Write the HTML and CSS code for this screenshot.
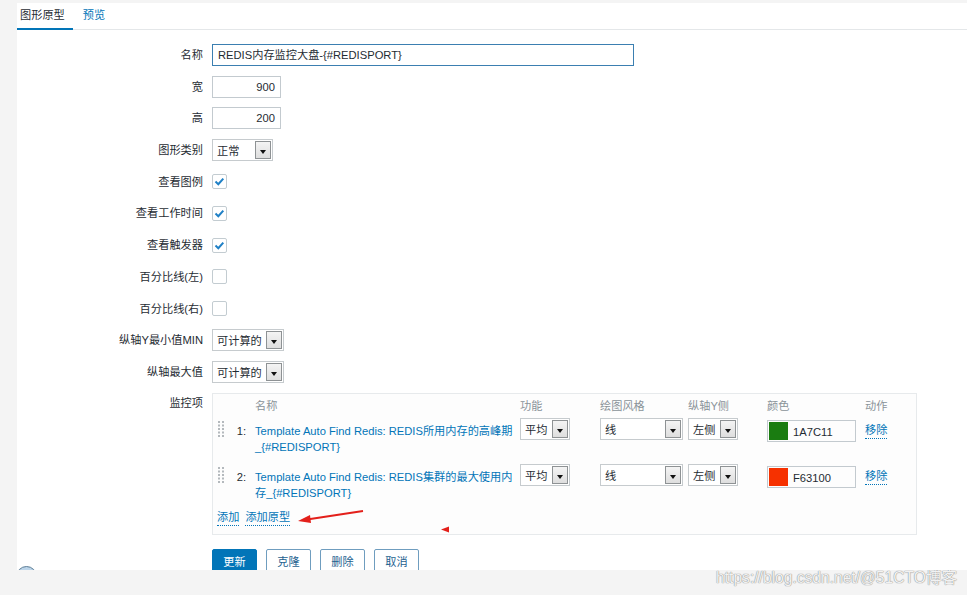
FILE: index.html
```html
<!DOCTYPE html>
<html lang="zh">
<head>
<meta charset="utf-8">
<title>图形原型</title>
<link rel="stylesheet" href="styles.css">
</head>
<body>
<div class="page">
  <div class="panel">
    <nav class="tabs">
      <span class="tab active">图形原型</span>
      <a class="tab link">预览</a>
    </nav>
    <div class="form">
      <div class="row"><span class="lbl">名称</span><div class="field name-field focus">REDIS内存监控大盘-{#REDISPORT}</div></div>
      <div class="row"><span class="lbl">宽</span><div class="field num-field">900</div></div>
      <div class="row"><span class="lbl">高</span><div class="field num-field">200</div></div>
      <div class="row"><span class="lbl">图形类别</span><div class="select s-type"><span class="val">正常</span><span class="btn"></span></div></div>
      <div class="row"><span class="lbl">查看图例</span><span class="check"><svg viewBox="0 0 15 15" width="15" height="15"><path d="M3.5 7.6 L6.3 10.2 L11.3 4.6" fill="none" stroke="#1f80c6" stroke-width="2"/></svg></span></div>
      <div class="row"><span class="lbl">查看工作时间</span><span class="check"><svg viewBox="0 0 15 15" width="15" height="15"><path d="M3.5 7.6 L6.3 10.2 L11.3 4.6" fill="none" stroke="#1f80c6" stroke-width="2"/></svg></span></div>
      <div class="row"><span class="lbl">查看触发器</span><span class="check"><svg viewBox="0 0 15 15" width="15" height="15"><path d="M3.5 7.6 L6.3 10.2 L11.3 4.6" fill="none" stroke="#1f80c6" stroke-width="2"/></svg></span></div>
      <div class="row"><span class="lbl">百分比线(左)</span><span class="check"></span></div>
      <div class="row"><span class="lbl">百分比线(右)</span><span class="check"></span></div>
      <div class="row"><span class="lbl">纵轴Y最小值MIN</span><div class="select s-calc"><span class="val">可计算的</span><span class="btn"></span></div></div>
      <div class="row"><span class="lbl">纵轴最大值</span><div class="select s-calc"><span class="val">可计算的</span><span class="btn"></span></div></div>
      <div class="row top"><span class="lbl lbl-top">监控项</span>
        <div class="items">
          <div class="irow head">
            <span></span><span></span><span>名称</span><span>功能</span><span>绘图风格</span><span>纵轴Y侧</span><span>颜色</span><span>动作</span>
          </div>
          <div class="irow item">
            <span class="handle"><svg width="6" height="16" viewBox="0 0 6 16"><g fill="#b4b9bd"><rect x="0" y="0" width="2" height="2"/><rect x="4" y="0" width="2" height="2"/><rect x="0" y="3.5" width="2" height="2"/><rect x="4" y="3.5" width="2" height="2"/><rect x="0" y="7" width="2" height="2"/><rect x="4" y="7" width="2" height="2"/><rect x="0" y="10.5" width="2" height="2"/><rect x="4" y="10.5" width="2" height="2"/><rect x="0" y="14" width="2" height="2"/><rect x="4" y="14" width="2" height="2"/></g></svg></span>
            <span class="no">1:</span>
            <a class="iname">Template Auto Find Redis: REDIS所用内存的高峰期_{#REDISPORT}</a>
            <div class="select s-func"><span class="val">平均</span><span class="btn"></span></div>
            <div class="select s-style"><span class="val">线</span><span class="btn"></span></div>
            <div class="select s-side"><span class="val">左侧</span><span class="btn"></span></div>
            <div class="color"><span class="swatch green"></span><span>1A7C11</span></div>
            <a class="act dotted">移除</a>
          </div>
          <div class="irow item">
            <span class="handle"><svg width="6" height="16" viewBox="0 0 6 16"><g fill="#b4b9bd"><rect x="0" y="0" width="2" height="2"/><rect x="4" y="0" width="2" height="2"/><rect x="0" y="3.5" width="2" height="2"/><rect x="4" y="3.5" width="2" height="2"/><rect x="0" y="7" width="2" height="2"/><rect x="4" y="7" width="2" height="2"/><rect x="0" y="10.5" width="2" height="2"/><rect x="4" y="10.5" width="2" height="2"/><rect x="0" y="14" width="2" height="2"/><rect x="4" y="14" width="2" height="2"/></g></svg></span>
            <span class="no">2:</span>
            <a class="iname">Template Auto Find Redis: REDIS集群的最大使用内存_{#REDISPORT}</a>
            <div class="select s-func"><span class="val">平均</span><span class="btn"></span></div>
            <div class="select s-style"><span class="val">线</span><span class="btn"></span></div>
            <div class="select s-side"><span class="val">左侧</span><span class="btn"></span></div>
            <div class="color"><span class="swatch red"></span><span>F63100</span></div>
            <a class="act dotted">移除</a>
          </div>
          <div class="adds"><a class="dotted">添加</a><a class="dotted">添加原型</a></div>
        </div>
      </div>
      <div class="buttons">
        <span class="button primary">更新</span>
        <span class="button">克隆</span>
        <span class="button">删除</span>
        <span class="button">取消</span>
      </div>
    </div>
    <svg class="annot" width="967" height="595" viewBox="0 0 967 595">
      <line x1="346" y1="508" x2="290" y2="516.5" stroke="#e3201b" stroke-width="2"/>
      <polygon points="281,518 293,512 294,520" fill="#e3201b"/>
      <polygon points="424,526.5 432,523.5 432,529.5" fill="#e3201b"/>
    </svg>
    <span class="help-circle"></span>
  </div>
  <div class="footer"><span class="mark">https://blog.csdn.net/@51CTO博客</span></div>
</div>
</body>
</html>
```
FILE: styles.css
```css
* { box-sizing: border-box; }
body {
  margin: 0;
  background: #f4f4f4;
  font-family: "Liberation Sans", "Noto Sans CJK SC", sans-serif;
  font-size: 11.2px;
  line-height: 16px;
  color: #1f2c33;
}
a { color: #0275b8; text-decoration: none; }
.page { padding: 3px 0 0 17px; }
.panel {
  background: #fff;
  height: 567px;
  overflow: hidden;
  position: relative;
}
.tabs {
  display: flex;
  height: 27px;
  border-bottom: 1px solid #e4e7e9;
}
.tab {
  padding: 4px 8px 0 3px;
  height: 27px;
}
.tab.active {
  border-bottom: 2px solid #0275b8;
  color: #1f2c33;
}
.tab.link { margin-left: 7px; padding-left: 3px; }
.form { padding-top: 14px; }
.row {
  display: flex;
  align-items: center;
  min-height: 22px;
  margin-bottom: 9.7px;
}
.row.top { align-items: flex-start; margin-bottom: 14px; }
.lbl {
  width: 195px;
  padding-right: 9px;
  text-align: right;
  flex: none;
}
.lbl-top { padding-top: 2px; }
.field {
  height: 22px;
  border: 1px solid #c3cacf;
  padding: 2px 5px 0;
  background: #fff;
}
.name-field { width: 422px; }
.focus { border-color: #3b7fb1; }
.num-field { width: 69px; text-align: right; padding-right: 5px; }
.select {
  display: flex;
  height: 22px;
  border: 1px solid #c6cbce;
  background: #fff;
  padding: 1px;
}
.select .val { flex: 1; padding: 2px 0 0 3px; white-space: nowrap; }
.select .btn {
  width: 16px;
  flex: none;
  border: 1px solid #8e9294;
  background: linear-gradient(#f4f4f4, #dedede);
  position: relative;
}
.select .btn::after {
  content: "";
  position: absolute;
  left: 4px;
  top: 8px;
  border-left: 3.5px solid transparent;
  border-right: 3.5px solid transparent;
  border-top: 4px solid #111;
}
.s-type { width: 61px; }
.s-calc { width: 72px; }
.s-func { width: 50px; }
.s-style { width: 83px; }
.s-side { width: 50px; }
.check {
  width: 15px;
  height: 15px;
  border: 1px solid #c3ccd1;
  border-radius: 2px;
  background: #fff;
  display: flex;
  align-items: center;
  justify-content: center;
}
.check svg { display: block; flex: none; }
.items {
  width: 705px;
  height: 142px;
  border: 1px solid #e7eaec;
  background: #fdfdfd;
  padding: 4px 0 0 4px;
}
.irow {
  display: grid;
  grid-template-columns: 17px 21px 265px 80px 88px 79px 98px 1fr;
}
.head { color: #8a9399; margin-bottom: 4px; }
.item { align-items: start; margin-bottom: 9px; }
.item:last-of-type { margin-bottom: 6px; }
.handle { padding: 3px 0 0 1px; }
.handle svg { display: block; }
.no { text-align: right; padding: 5px 9px 0 0; }
.iname { padding: 5px 3px 0 0; }
.color {
  width: 89px;
  height: 22px;
  margin-top: 2px;
  border: 1px solid #c3cacf;
  padding: 1px;
  display: flex;
  align-items: stretch;
}
.color span:last-child { padding: 2px 0 0 5px; }
.swatch { width: 19px; flex: none; }
.swatch.green { background: #1a7c11; }
.swatch.red { background: #f63100; }
.act { justify-self: start; margin-top: 5px; }
.dotted { border-bottom: 1px dotted #0275b8; line-height: 15px; }
.adds { display: flex; gap: 6px; }
.buttons { display: flex; gap: 9px; padding-left: 195px; }
.button {
  width: 45px;
  height: 24px;
  border: 1px solid #6f9dbf;
  border-radius: 2px;
  color: #24618f;
  text-align: center;
  padding-top: 4px;
  background: #fff;
}
.button.primary { background: #0275b8; border-color: #0275b8; color: #fff; }
.annot { position: absolute; left: 0; top: 0; pointer-events: none; }
.help-circle {
  position: absolute;
  left: -1px;
  top: 563px;
  width: 21px;
  height: 21px;
  border-radius: 50%;
  background: #bcd5ea;
  border: 1px solid #5c7d96;
}
.footer {
  height: 25px;
  display: flex;
  justify-content: flex-end;
  padding-right: 10px;
}
.mark {
  font-size: 15.6px;
  line-height: 16px;
  color: #f2f2f2;
  text-shadow: 0 0 1px #8c8c8c, 0 0 1px #8c8c8c;
}
```
